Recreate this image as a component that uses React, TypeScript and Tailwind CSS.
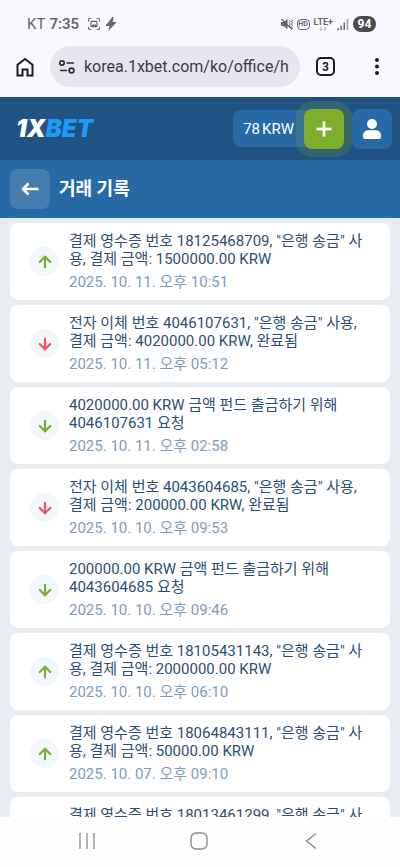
import { ArrowDown, ArrowUp, Plus } from 'lucide-react';

type Transaction = {
  id: string;
  lines: string[];
  date?: string;
  direction: 'up' | 'down';
  color: string;
};

const GREEN = 'text-[#7cae2d]';
const RED = 'text-[#f5555c]';

const transactions: Transaction[] = [
  {
    id: '18125468709',
    lines: ['결제 영수증 번호 18125468709, "은행 송금" 사', '용, 결제 금액: 1500000.00 KRW'],
    date: '2025. 10. 11. 오후 10:51',
    direction: 'up',
    color: GREEN,
  },
  {
    id: '4046107631',
    lines: ['전자 이체 번호 4046107631, "은행 송금" 사용,', '결제 금액: 4020000.00 KRW, 완료됨'],
    date: '2025. 10. 11. 오후 05:12',
    direction: 'down',
    color: RED,
  },
  {
    id: '4046107631-request',
    lines: ['4020000.00 KRW 금액 펀드 출금하기 위해', '4046107631 요청'],
    date: '2025. 10. 11. 오후 02:58',
    direction: 'down',
    color: GREEN,
  },
  {
    id: '4043604685',
    lines: ['전자 이체 번호 4043604685, "은행 송금" 사용,', '결제 금액: 200000.00 KRW, 완료됨'],
    date: '2025. 10. 10. 오후 09:53',
    direction: 'down',
    color: RED,
  },
  {
    id: '4043604685-request',
    lines: ['200000.00 KRW 금액 펀드 출금하기 위해', '4043604685 요청'],
    date: '2025. 10. 10. 오후 09:46',
    direction: 'down',
    color: GREEN,
  },
  {
    id: '18105431143',
    lines: ['결제 영수증 번호 18105431143, "은행 송금" 사', '용, 결제 금액: 2000000.00 KRW'],
    date: '2025. 10. 10. 오후 06:10',
    direction: 'up',
    color: GREEN,
  },
  {
    id: '18064843111',
    lines: ['결제 영수증 번호 18064843111, "은행 송금" 사', '용, 결제 금액: 50000.00 KRW'],
    date: '2025. 10. 07. 오후 09:10',
    direction: 'up',
    color: GREEN,
  },
  {
    id: '18013461299',
    lines: ['결제 영수증 번호 18013461299, "은행 송금" 사'],
    direction: 'up',
    color: GREEN,
  },
];

const StatusBar = () => (
  <div className="flex h-12 items-center justify-between pr-6 pl-[27px] text-[#66666b]">
    <div className="flex items-center gap-1 text-[15px] leading-5">
      <span>KT</span>
      <span className="font-semibold">7:35</span>
      <svg className="ml-1 size-[14px]" viewBox="0 0 16 16" fill="none" stroke="currentColor" strokeWidth="1.3">
        <path d="M1.7 5V3.5a1.8 1.8 0 0 1 1.8-1.8H5M11 1.7h1.5a1.8 1.8 0 0 1 1.8 1.8V5M14.3 11v1.5a1.8 1.8 0 0 1-1.8 1.8H11M5 14.3H3.5a1.8 1.8 0 0 1-1.8-1.8V11" />
        <rect x="4.6" y="5" width="6.8" height="6" rx="1" />
        <path d="M5 10l2-2 1.5 1.5L10 8l1.5 2v1H5z" fill="currentColor" stroke="none" />
      </svg>
      <svg className="h-4 w-3" viewBox="0 0 12 16" fill="currentColor">
        <path d="M7.5 1L.8 9.2c-.3.4 0 .8.4.8H4.5L3.4 15l7.4-8.1c.3-.4.1-.9-.4-.9H7.6L8.7 1.4C8.8.8 7.9.5 7.5 1z" />
      </svg>
    </div>
    <div className="flex items-center gap-1">
      <svg className="h-3 w-3" viewBox="0 0 12 12" fill="currentColor">
        <path d="M0 4h2.5L6.5.7v10.6L2.5 8H0z" />
        <path
          d="M8 2l1.3 1.3L8 4.6l1.3 1.3L8 7.2l1.3 1.3L8 10M10.3 1l1.2 1.2-1.2 1.3 1.2 1.3-1.2 1.3 1.2 1.3-1.2 1.3 1.2 1.3-1 1"
          fill="none"
          stroke="currentColor"
        />
        <path d="M.5 1l10.5 10.5" stroke="currentColor" strokeWidth="1.2" />
      </svg>
      <span className="flex h-[11px] w-[13px] items-center justify-center rounded-sm border border-current text-[7px] leading-none font-bold">
        HD
      </span>
      <div className="flex flex-col items-center">
        <span className="text-[9px] leading-[9px] font-bold">LTE+</span>
        <svg className="h-1 w-2 opacity-60" viewBox="0 0 8 4" fill="none" stroke="currentColor" strokeWidth=".8">
          <path d="M2 0v3.500M.7 2.200L2 3.500l1.300-1.300M6 4V.5M4.700 1.800L6 .5l1.300 1.300" />
        </svg>
      </div>
      <svg className="h-3 w-3" viewBox="0 0 12 12" fill="currentColor">
        <path d="M.5 10H2v2H.5zM3.5 7.500H5V12H3.500zM6.500 4.500H8V12H6.500z" />
        <path d="M9.700 1h1.500v11H9.700z" opacity=".6" />
      </svg>
      <span className="flex h-4 w-[23px] items-center justify-center rounded-full bg-[#4b4b4f] text-xs leading-4 font-bold text-white">
        94
      </span>
    </div>
  </div>
);

const BrowserBar = () => (
  <div className="flex h-[49px] items-center px-3 pb-3">
    <button type="button" aria-label="홈" className="mr-3 flex w-[26px] shrink-0 justify-center">
      <svg className="h-5 w-[18px] text-[#1c1b20]" viewBox="0 0 18 20" fill="none" stroke="currentColor" strokeWidth="2">
        <path d="M1.500 7.800L9 2l7.500 5.800V18.500h-5v-6h-5v6h-5z" />
      </svg>
    </button>
    <div className="flex h-[41px] min-w-0 flex-1 items-center gap-2 rounded-full bg-[#e7e5ee] pr-2 pl-2">
      <svg className="h-4 w-[18px] shrink-0 text-[#2e2d33]" viewBox="0 0 18 16" fill="none" stroke="currentColor" strokeWidth="1.7">
        <circle cx="4" cy="4" r="2.200" />
        <path d="M8.500 4H16M2 11.500h7" />
        <circle cx="13.500" cy="11.500" r="2.400" />
      </svg>
      <input
        type="text"
        aria-label="주소"
        defaultValue="korea.1xbet.com/ko/office/h"
        className="w-full min-w-0 bg-transparent text-base leading-6 text-[#3d3c42] outline-none"
      />
    </div>
    <button
      type="button"
      aria-label="탭"
      className="ml-4 flex size-[19px] shrink-0 items-center justify-center rounded-[5px] border-2 border-[#1c1b20] text-xs leading-none font-bold text-[#1c1b20]"
    >
      3
    </button>
    <button type="button" aria-label="메뉴" className="ml-[30px] flex w-[23px] shrink-0 justify-center text-[#1c1b20]">
      <svg className="h-[19px] w-1" viewBox="0 0 4 19" fill="currentColor">
        <circle cx="2" cy="3" r="2" />
        <circle cx="2" cy="9.500" r="2" />
        <circle cx="2" cy="16" r="2" />
      </svg>
    </button>
  </div>
);

const SiteHeader = () => (
  <header className="flex h-[63px] shrink-0 items-center justify-between bg-[#205381] pr-2 pl-4">
    <a href="#" className="font-['Inter'] text-2xl leading-6 font-black text-white italic">
      1X<span className="text-[#1b9cf6]">BET</span>
    </a>
    <div className="flex items-center">
      <span className="-mr-2 flex h-[37px] items-center gap-[2px] rounded-l-lg bg-[#286aa6] pr-[18px] pl-[10px] text-[15px] leading-5 text-white">
        <span>78</span>
        <span>KRW</span>
      </span>
      <button
        type="button"
        aria-label="입금"
        className="flex size-10 items-center justify-center rounded-lg bg-[#7dae2c] text-white ring-8 ring-[#7dae2c]/20"
      >
        <Plus className="size-[26px]" strokeWidth={2.5} strokeLinecap="butt" />
      </button>
      <button
        type="button"
        aria-label="내 계정"
        className="ml-2 flex size-10 items-center justify-center rounded-lg bg-[#286aa6] text-white"
      >
        <svg className="h-5 w-[18px]" viewBox="0 0 18 20" fill="currentColor">
          <circle cx="9" cy="5" r="5" />
          <path d="M5 11.200h8a5 5 0 0 1 5 5v1.300a2.500 2.500 0 0 1-2.500 2.500h-13A2.500 2.500 0 0 1 0 17.500v-1.300a5 5 0 0 1 5-5z" />
        </svg>
      </button>
    </div>
  </header>
);

const TitleBar = () => (
  <div className="flex h-[58px] shrink-0 items-center gap-[9px] bg-[#286aa6] px-[10px]">
    <button
      type="button"
      aria-label="뒤로"
      className="flex size-10 items-center justify-center rounded-lg bg-[#457db0] text-white"
    >
      <svg className="h-[14px] w-[18px]" viewBox="0 0 18 14" fill="none" stroke="currentColor" strokeWidth="2.6" strokeLinejoin="round">
        <path d="M7.500 1.500L2 7l5.500 5.500M2 7h15.500" />
      </svg>
    </button>
    <h1 className="text-lg leading-6 font-bold text-white">거래 기록</h1>
  </div>
);

const TransactionCard = ({ item }: { item: Transaction }) => {
  const Icon = item.direction === 'up' ? ArrowUp : ArrowDown;

  return (
    <li className="flex min-h-[77px] items-start rounded-lg bg-white pt-[9px] pr-2 pl-5">
      <span className="mt-[15px] mr-[10px] flex size-[29px] shrink-0 items-center justify-center rounded-full bg-[#f2f7fc]">
        <Icon className={`size-[18px] ${item.color}`} strokeWidth={3} />
      </span>
      <div className="min-w-0 text-[15px] whitespace-nowrap">
        {item.lines.map((line) => (
          <p key={line} className="leading-[18px] text-[#2c4f76]">
            {line}
          </p>
        ))}
        {item.date && <p className="mt-1 leading-5 text-[#7d9db9]">{item.date}</p>}
      </div>
    </li>
  );
};

const NavigationBar = () => (
  <nav className="flex h-[50px] shrink-0 items-center bg-[#fefefe] pr-[33px] pb-[2px] pl-[31px] text-[#8b8b8d]">
    <button type="button" aria-label="최근 앱" className="flex flex-1 justify-center">
      <svg className="h-4 w-[18px]" viewBox="0 0 18 16" fill="none" stroke="currentColor" strokeWidth="1.3">
        <path d="M2 0v16M9 0v16M16 0v16" />
      </svg>
    </button>
    <button type="button" aria-label="홈 화면" className="flex flex-1 justify-center">
      <svg className="size-[18px]" viewBox="0 0 18 18" fill="none" stroke="currentColor" strokeWidth="1.4">
        <rect x="1" y="1" width="16" height="16" rx="5" />
      </svg>
    </button>
    <button type="button" aria-label="뒤로 가기" className="flex flex-1 justify-center">
      <svg className="h-4 w-3" viewBox="0 0 12 16" fill="none" stroke="currentColor" strokeWidth="1.4">
        <path d="M11 .5L1.500 8l9.500 7.500" />
      </svg>
    </button>
  </nav>
);

const App = () => {
  return (
    <div className="flex h-screen flex-col overflow-hidden bg-[#e8edf2] font-['Roboto','Noto_Sans_CJK_KR',sans-serif]">
      <div className="shrink-0 bg-[#f9f8fe]">
        <StatusBar />
        <BrowserBar />
      </div>
      <SiteHeader />
      <TitleBar />
      <main className="min-h-0 flex-1 overflow-y-auto px-[10px] pt-[5px] [scrollbar-width:none]">
        <ul className="flex flex-col gap-[5px]">
          {transactions.map((item) => (
            <TransactionCard key={item.id} item={item} />
          ))}
        </ul>
      </main>
      <NavigationBar />
    </div>
  );
};

export default App;
